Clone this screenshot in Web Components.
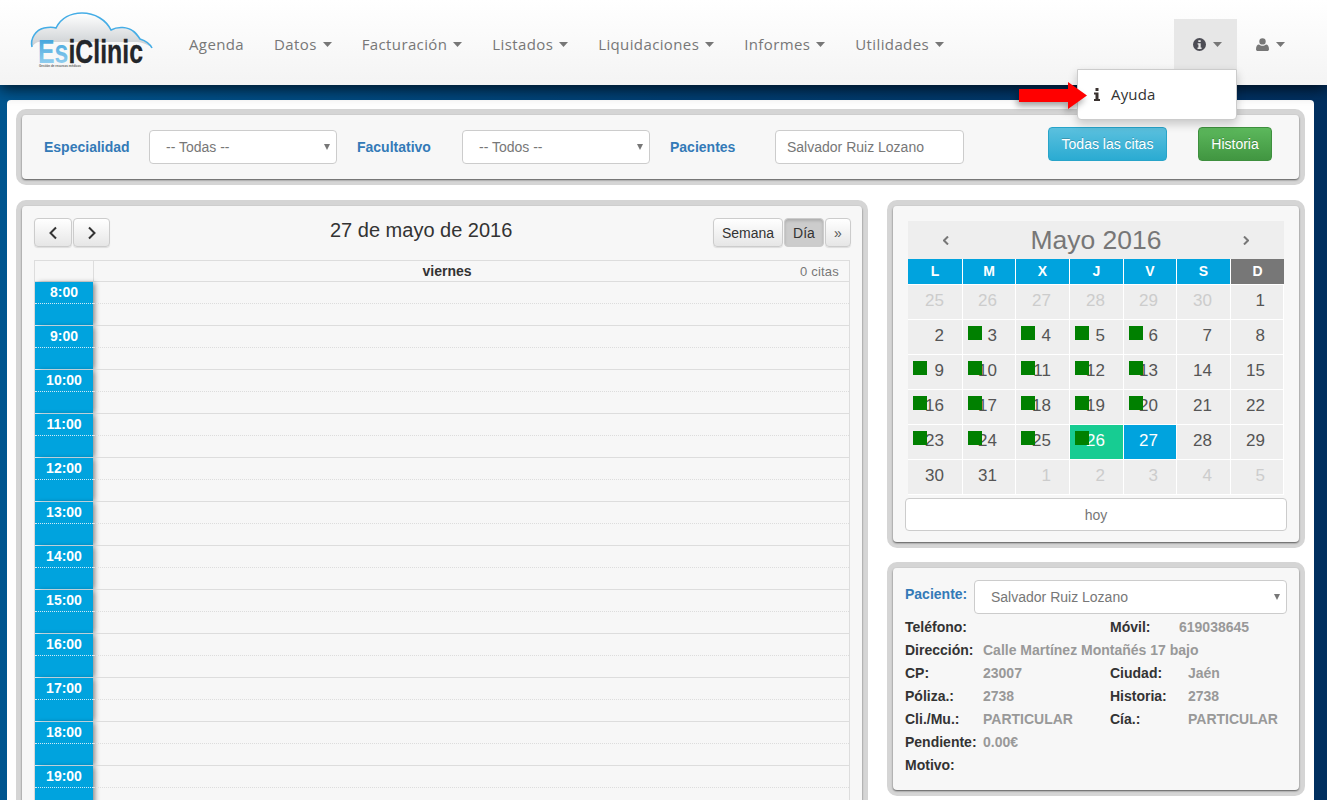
<!DOCTYPE html>
<html lang="es">
<head>
<meta charset="utf-8">
<title>EsiClinic</title>
<style>
  html, body { margin: 0; height: 100%; overflow: hidden; }
  body {
    font-family: "Liberation Sans", Arial, sans-serif;
    font-size: 14px;
    color: #333;
    background: linear-gradient(90deg, #00558f 0%, #003f73 50%, #002f5f 100%);
  }
</style>
</head>
<body>
<esi-app></esi-app>

<script>
// small helper, every element below just sets its html in the constructor
function shadow(el, html) {
  el.attachShadow({ mode: 'open' }).innerHTML = html;
}

const caret = '<svg width="9" height="5" viewBox="0 0 9 5"><path d="M0 0h9L4.500 5z" fill="currentColor"/></svg>';

class NavItem extends HTMLElement {
  constructor() {
    super();
    shadow(this, `
      <style>
        :host { display: flex; align-items: center; height: 50px; padding: 0 15px; color: #777;
                font: 15px "Open Sans", sans-serif; letter-spacing: .38px; white-space: nowrap; box-sizing: border-box; }
        :host([active]) { background: #e7e7e7; }
        :host([icon]) { width: 63px; padding: 0 0 0 19px; }
        svg { margin-left: 6px; margin-top: 1px; }
        :host([icon]) svg { margin-left: 7px; }
      </style>
      <slot></slot>${this.hasAttribute('nocaret') ? '' : caret}
    `);
  }
}
customElements.define('nav-item', NavItem);

class DropMenu extends HTMLElement {
  constructor() {
    super();
    shadow(this, `
      <style>
        :host { position: absolute; left: 1077px; top: 69px; width: 160px; height: 51px; box-sizing: border-box;
                background: #fff; border: 1px solid #ccc; border-radius: 0 0 4px 4px; z-index: 5;
                box-shadow: 0 4px 10px rgba(0,0,0,.2); display: flex; align-items: center; padding-left: 16px;
                font: 15px "Open Sans", sans-serif; letter-spacing: .15px; color: #333; }
        svg { margin-right: 11px; }
        span { margin-top: -2px; }
        .arrow { position: absolute; left: -59px; top: 12px; margin: 0; filter: drop-shadow(-2px 4px 3px rgba(0,0,0,.35)); }
      </style>
      <svg width="6" height="13" viewBox="0 0 6 13"><path d="M1.500 0h3v3h-3zM0 4.500h4.500v6.500H6v2H0v-2h1.500V6.500H0z" fill="#3a3230"/></svg>
      <span>Ayuda</span>
      <svg class="arrow" width="68" height="27" viewBox="0 0 68 27"><path d="M0 7h49V0l19 13.500L49 27v-7H0z" fill="#f00"/></svg>
    `);
  }
}
customElements.define('drop-menu', DropMenu);

class EsiNav extends HTMLElement {
  constructor() {
    super();
    shadow(this, `
      <style>
        :host { display: flex; align-items: flex-start; position: relative; height: 85px; box-sizing: border-box; padding-left: 28px;
                background: linear-gradient(#fff, #f4f4f4); box-shadow: 0 4px 14px rgba(0,0,0,.7); z-index: 3; }
        .logo { width: 146px; height: 65px; margin-top: 10px; flex: none; }
        .items { display: flex; margin-top: 19px; }
        .right { display: flex; margin: 19px 27px 0 auto; }
      </style>
      <svg class="logo" viewBox="28 10 146 65">
        <defs>
          <linearGradient id="fog" x1="0" y1="0" x2="0" y2="1"><stop offset="0" stop-color="#fff"/><stop offset="1" stop-color="#c9cdd0"/></linearGradient>
          <linearGradient id="esi" x1="0" y1="0" x2="0" y2="1"><stop offset="0" stop-color="#2f9bd8"/><stop offset="1" stop-color="#a6d8f3"/></linearGradient>
        </defs>
        <path d="M32 47C30 38 36 30 44 28C49 27 53 27 56 28C61 18 71 13 82 13C95 13 106 20 111 30C118 26 128 27 133 31C136 33 138 36 140 39C146 41 150 44 152 48C146 43 140 42 135 42L38 42C35 43 33 45 32 47Z" fill="url(#fog)" stroke="none"/>
        <path d="M32 47C30 38 36 30 44 28C49 27 53 27 56 28C61 18 71 13 82 13C95 13 106 20 111 30C118 26 128 27 133 31C136 33 138 36 140 39C146 41 150 44 152 48" fill="none" stroke="#45ade6" stroke-width="1.600"/>
        <text x="38" y="63" font-family="Liberation Sans" font-weight="700" font-size="33" fill="#23262a" stroke="#23262a" stroke-width=".3" textLength="105" lengthAdjust="spacingAndGlyphs"><tspan fill="url(#esi)" stroke="none">Es</tspan>iClinic</text>
        <text x="39" y="67" font-family="Liberation Sans" font-weight="700" font-size="3" fill="#666">Gestión de recursos médicos</text>
      </svg>
      <div class="items">
        <nav-item nocaret>Agenda</nav-item>
        <nav-item>Datos</nav-item>
        <nav-item>Facturación</nav-item>
        <nav-item>Listados</nav-item>
        <nav-item>Liquidaciones</nav-item>
        <nav-item>Informes</nav-item>
        <nav-item>Utilidades</nav-item>
      </div>
      <div class="right">
        <nav-item icon active>
          <svg width="13" height="13" viewBox="0 0 13 13" style="display:block;margin:0"><path fill-rule="evenodd" d="M6.500 0a6.500 6.500 0 1 0 0 13a6.500 6.500 0 0 0 0-13zM5.300 2.200h2.400v1.800H5.300zM4.600 5.200h3.100v4.400h.9v1.300H4.500V9.600h.9V6.500h-.8z" fill="#4d4d55"/></svg>
        </nav-item>
        <nav-item icon>
          <svg width="13" height="13" viewBox="0 0 13 13" style="display:block;margin:0"><circle cx="6.500" cy="3.400" r="3.200" fill="#777"/><path d="M0 11.200C0 8.400 1.200 6.400 3 6.400C4 7.300 5.200 7.700 6.500 7.700S9 7.300 10 6.400C11.800 6.400 13 8.400 13 11.200C13 12.400 12.200 13 11.200 13H1.800C.8 13 0 12.400 0 11.200z" fill="#777"/></svg>
        </nav-item>
      </div>
      <drop-menu></drop-menu>
    `);
  }
}
customElements.define('esi-nav', EsiNav);

// gray framed card used for all four boxes
class PanelCard extends HTMLElement {
  constructor() {
    super();
    shadow(this, `
      <style>
        :host { display: block; box-sizing: border-box; border: 6px solid #d5d5d5; border-radius: 10px; }
        .in { background: #f7f7f7; height: 100%; box-sizing: border-box; border-radius: 4px; box-shadow: 0 1px 2px rgba(0,0,0,.6); overflow: hidden; }
      </style>
      <div class="in"><slot></slot></div>
    `);
  }
}
customElements.define('panel-card', PanelCard);

class FakeSelect extends HTMLElement {
  constructor() {
    super();
    shadow(this, `
      <style>
        :host { display: flex; align-items: center; box-sizing: border-box; height: 34px; background: #fff; border: 1px solid #ccc;
                border-radius: 4px; padding-left: 16px; color: #777; font-size: 14px; position: relative; white-space: nowrap; }
        :host([plain]) { padding-left: 11px; }
        i { position: absolute; right: 6px; top: 13px; border: 3.500px solid transparent; border-top: 6px solid #777; border-bottom: 0; }
        :host([plain]) i { display: none; }
      </style>
      <slot></slot><i></i>
    `);
  }
}
customElements.define('fake-select', FakeSelect);

class AppButton extends HTMLElement {
  constructor() {
    super();
    shadow(this, `
      <style>
        :host { display: flex; align-items: center; justify-content: center; box-sizing: border-box; height: 34px; border-radius: 4px;
                color: #fff; font-size: 14px; text-shadow: 0 -1px 0 rgba(0,0,0,.2); white-space: nowrap; }
        :host([kind=info]) { background: linear-gradient(#5bc0de, #2aabd2); border: 1px solid #28a4c9; }
        :host([kind=ok]) { background: linear-gradient(#5cb85c, #419641); border: 1px solid #3e8f3e; }
      </style>
      <slot></slot>
    `);
  }
}
customElements.define('app-button', AppButton);

class FilterBar extends HTMLElement {
  constructor() {
    super();
    shadow(this, `
      <style>
        :host { display: flex; align-items: center; height: 64px; padding-left: 22px; box-sizing: border-box; }
        b { width: 105px; flex: none; color: #337ab7; font-size: 14px; }
        fake-select { width: 188px; flex: none; margin-right: 20px; }
        .pac { width: 189px; margin-right: 84px; }
        app-button { flex: none; margin-top: -6px; }
      </style>
      <b>Especialidad</b><fake-select>-- Todas --</fake-select>
      <b>Facultativo</b><fake-select>-- Todos --</fake-select>
      <b>Pacientes</b><fake-select class="pac" plain>Salvador Ruiz Lozano</fake-select>
      <app-button kind="info" style="width:119px">Todas las citas</app-button>
      <app-button kind="ok" style="width:74px;margin-left:31px">Historia</app-button>
    `);
  }
}
customElements.define('filter-bar', FilterBar);

class ToolButton extends HTMLElement {
  constructor() {
    super();
    shadow(this, `
      <style>
        :host { display: flex; align-items: center; justify-content: center; box-sizing: border-box; height: 29px; border: 1px solid #ccc;
                border-radius: 4px; background: linear-gradient(#fff, #e6e6e6); color: #333; font-size: 14px; box-shadow: 0 1px 1px rgba(0,0,0,.1); }
        :host([on]) { background: #ccc; box-shadow: inset 0 2px 3px rgba(0,0,0,.15); }
      </style>
      <slot></slot>
    `);
  }
}
customElements.define('tool-button', ToolButton);

class HourRow extends HTMLElement {
  constructor() {
    super();
    shadow(this, `
      <style>
        :host { display: grid; grid-template-columns: 58px 1fr; height: 44px; }
        .t { background: #00a3de; color: #fff; font-weight: 700; font-size: 14px; text-align: center; box-sizing: border-box;
             box-shadow: 3px 0 5px -1px rgba(0,0,0,.45); }
        .h { height: 22px; line-height: 21px; box-sizing: border-box; border-bottom: 1px dotted #cfeaf7; }
        .e { height: 22px; box-sizing: border-box; border-bottom: 1px solid #d9eef8; }
        .a { height: 22px; box-sizing: border-box; border-bottom: 1px dotted #ddd; }
        .b { height: 22px; box-sizing: border-box; border-bottom: 1px solid #ddd; }
      </style>
      <div class="t"><div class="h">${this.getAttribute('time')}</div><div class="e"></div></div>
      <div><div class="a"></div><div class="b"></div></div>
    `);
  }
}
customElements.define('hour-row', HourRow);

class DayCalendar extends HTMLElement {
  constructor() {
    super();
    let rows = '';
    for (let h = 8; h < 20; h++) rows += `<hour-row time="${h}:00"></hour-row>`;
    const chevL = '<svg width="10" height="14" viewBox="0 0 10 14"><path d="M8 1.500L2.500 7L8 12.500" fill="none" stroke="#333" stroke-width="2"/></svg>';
    const chevR = '<svg width="10" height="14" viewBox="0 0 10 14"><path d="M2 1.500L7.500 7L2 12.500" fill="none" stroke="#333" stroke-width="2"/></svg>';
    shadow(this, `
      <style>
        :host { display: block; padding: 12px 12px 0 12px; }
        .bar { display: flex; height: 42px; align-items: flex-start; }
        .nav { display: flex; gap: 1px; }
        .title { margin-left: 220px; font-size: 20px; line-height: 25px; color: #333; white-space: nowrap; }
        .views { display: flex; gap: 1px; margin-left: auto; margin-right: -1px; }
        .tab { border-left: 1px solid #ddd; border-right: 1px solid #ddd; }
        .head { display: grid; grid-template-columns: 58px 1fr; height: 22px; border-top: 1px solid #ddd; box-sizing: border-box; }
        .head > div { border-bottom: 1px solid #ddd; box-sizing: border-box; }
        .day { display: flex; align-items: center; border-left: 1px solid #ddd; }
        .day b { flex: 1; text-align: center; }
        .day span { color: #777; font-size: 13px; letter-spacing: .2px; padding-right: 10px; }
      </style>
      <div class="bar">
        <div class="nav">
          <tool-button style="width:38px">${chevL}</tool-button>
          <tool-button style="width:37px">${chevR}</tool-button>
        </div>
        <div class="title">27 de mayo de 2016</div>
        <div class="views">
          <tool-button style="width:70px">Semana</tool-button>
          <tool-button on style="width:40px">Día</tool-button>
          <tool-button style="width:26px;color:#555">»</tool-button>
        </div>
      </div>
      <div class="tab">
        <div class="head"><div></div><div class="day"><b>viernes</b><span>0 citas</span></div></div>
        <div>${rows}</div>
      </div>
    `);
  }
}
customElements.define('day-calendar', DayCalendar);

class MiniCalendar extends HTMLElement {
  constructor() {
    super();
    const heads = ['L', 'M', 'X', 'J', 'V', 'S', 'D'];
    const cells = [
      '25*','26*','27*','28*','29*','30*','1',
      '2','3#','4#','5#','6#','7','8',
      '9#','10#','11#','12#','13#','14','15',
      '16#','17#','18#','19#','20#','21','22',
      '23#','24#','25#','26#g','27b','28','29',
      '30','31','1*','2*','3*','4*','5*'
    ];
    const html = cells.map(c => {
      const n = parseInt(c);
      let cls = '';
      if (c.includes('*')) cls += ' off';
      if (c.endsWith('g')) cls += ' today';
      if (c.endsWith('b')) cls += ' sel';
      return `<div class="c${cls}">${c.includes('#') ? '<i></i>' : ''}${n}</div>`;
    }).join('');
    shadow(this, `
      <style>
        :host { display: block; padding: 15px 12px 0 12px; }
        .cal { margin: 0 3px; }
        .top { display: flex; align-items: center; justify-content: space-between; height: 38px; background: #eee; padding: 0 35px; color: #777; }
        .top span { font-size: 26.500px; }
        .grid { display: grid; grid-template-columns: 55px 53px 54px 54px 53px 54px 53px; }
        .h { height: 26px; line-height: 25px; text-align: center; background: #00a3de; color: #fff; font-weight: 700; font-size: 14px; border-right: 1px solid #fff; box-sizing: border-box; border-bottom: 1px solid #fff; }
        .h.d { background: #777; border-right: 0; }
        .c { position: relative; height: 35px; line-height: 32px; box-sizing: border-box; text-align: right; padding-right: 18px; font-size: 17px; color: #555;
             background: #eee; border-right: 1px solid #fff; border-bottom: 1px solid #fff; }
        .c.off { color: #ccc; }
        .c.today { background: #17cc92; color: #fff; }
        .c.sel { background: #00a3de; color: #fff; }
        .c i { position: absolute; left: 5px; top: 6px; width: 14px; height: 14px; background: #008000; }
        .hoy { display: flex; align-items: center; justify-content: center; height: 33px; margin-top: 3px; box-sizing: border-box;
               background: #fff; border: 1px solid #ccc; border-radius: 4px; color: #777; font-size: 14px; }
      </style>
      <div class="cal">
        <div class="top">
          <svg width="6" height="9" viewBox="0 0 6 9"><path d="M5 .500L1 4.500L5 8.500" fill="none" stroke="#777" stroke-width="2"/></svg>
          <span>Mayo 2016</span>
          <svg width="6" height="9" viewBox="0 0 6 9"><path d="M1 .500L5 4.500L1 8.500" fill="none" stroke="#777" stroke-width="2"/></svg>
        </div>
        <div class="grid">${heads.map(h => `<div class="h${h === 'D' ? ' d' : ''}">${h}</div>`).join('')}${html}</div>
      </div>
      <div class="hoy">hoy</div>
    `);
  }
}
customElements.define('mini-calendar', MiniCalendar);

class InfoRow extends HTMLElement {
  constructor() {
    super();
    const a = n => this.getAttribute(n) || '';
    shadow(this, `
      <style>
        :host { display: flex; height: 23px; line-height: 23px; font-size: 14px; font-weight: 700; white-space: nowrap; }
        .l { color: #333; }
        .v { color: #999; }
      </style>
      <span class="l" style="width:78px;flex:none">${a('label')}</span>
      <span class="v" style="width:127px;flex:none">${a('value')}</span>
      <span class="l" style="width:${a('w2') || 78}px;flex:none">${a('label2')}</span>
      <span class="v">${a('value2')}</span>
    `);
  }
}
customElements.define('info-row', InfoRow);

class PatientCard extends HTMLElement {
  constructor() {
    super();
    shadow(this, `
      <style>
        :host { display: block; padding: 12px 12px 0 12px; }
        .p { display: flex; align-items: flex-start; height: 38px; }
        .p b { width: 69px; flex: none; color: #337ab7; font-size: 14px; line-height: 28px; }
        fake-select { flex: 1; }
      </style>
      <div class="p"><b>Paciente:</b><fake-select>Salvador Ruiz Lozano</fake-select></div>
      <div style="margin-top:-2px">
        <info-row label="Teléfono:" label2="Móvil:" w2="69" value2="619038645"></info-row>
        <info-row label="Dirección:" value="Calle Martínez Montañés 17 bajo"></info-row>
        <info-row label="CP:" value="23007" label2="Ciudad:" value2="Jaén"></info-row>
        <info-row label="Póliza.:" value="2738" label2="Historia:" value2="2738"></info-row>
        <info-row label="Cli./Mu.:" value="PARTICULAR" label2="Cía.:" value2="PARTICULAR"></info-row>
        <info-row label="Pendiente:" value="0.00€"></info-row>
        <info-row label="Motivo:"></info-row>
      </div>
    `);
  }
}
customElements.define('patient-card', PatientCard);

class EsiApp extends HTMLElement {
  constructor() {
    super();
    shadow(this, `
      <style>
        :host { display: block; height: 800px; overflow: hidden; }
        .page { margin: 15px 13px 0 7px; background: #fff; border-radius: 4px 4px 0 0; padding: 9px 9px 0 9px; height: 800px; box-sizing: border-box; }
        .cols { display: grid; grid-template-columns: 852px 418px; column-gap: 19px; margin-top: 15px; }
        .side { display: flex; flex-direction: column; gap: 14px; }
      </style>
      <esi-nav></esi-nav>
      <div class="page">
        <panel-card style="height:76px"><filter-bar></filter-bar></panel-card>
        <div class="cols">
          <panel-card style="height:720px"><day-calendar></day-calendar></panel-card>
          <div class="side">
            <panel-card style="height:348px"><mini-calendar></mini-calendar></panel-card>
            <panel-card style="height:234px"><patient-card></patient-card></panel-card>
          </div>
        </div>
      </div>
    `);
  }
}
customElements.define('esi-app', EsiApp);
</script>
</body>
</html>
